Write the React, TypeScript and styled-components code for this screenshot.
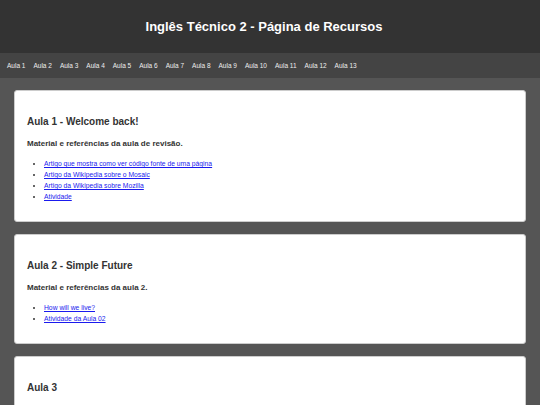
import React from 'react';
import styled, { createGlobalStyle } from 'styled-components';

const GlobalStyle = createGlobalStyle`
  html, body {
    margin: 0;
    padding: 0;
    background: #555555;
    font-family: "Liberation Sans", Arial, sans-serif;
  }
`;

interface LinkItem {
  label: string;
}

interface Lesson {
  title: string;
  subtitle?: string;
  links: LinkItem[];
}

const LESSONS: Lesson[] = [
  {
    title: 'Aula 1 - Welcome back!',
    subtitle: 'Material e referências da aula de revisão.',
    links: [
      { label: 'Artigo que mostra como ver código fonte de uma página' },
      { label: 'Artigo da Wikipedia sobre o Mosaic' },
      { label: 'Artigo da Wikipedia sobre Mozilla' },
      { label: 'Atividade' },
    ],
  },
  {
    title: 'Aula 2 - Simple Future',
    subtitle: 'Material e referências da aula 2.',
    links: [{ label: 'How will we live?' }, { label: 'Atividade da Aula 02' }],
  },
  {
    title: 'Aula 3',
    subtitle: 'Material e referências da aula 3.',
    links: [{ label: 'Atividade da Aula 03' }],
  },
];

const NAV = Array.from({ length: 13 }, (_, i) => `Aula ${i + 1}`);

const Header = styled.header`
  height: 53px;
  background: #333333;
  display: flex;
  align-items: center;
  justify-content: center;
  padding-right: 12px;
`;

const Title = styled.h1`
  margin: 0;
  color: #ffffff;
  font-size: 13px;
  font-weight: bold;
`;

const Nav = styled.nav`
  height: 25px;
  background: #444444;
  display: flex;
  align-items: center;
  padding: 0 7px;
  gap: 8px;
`;

const NavLink = styled.a`
  color: #eeeeee;
  font-size: 6.5px;
  text-decoration: none;
`;

const Main = styled.main`
  display: flex;
  flex-direction: column;
  gap: 12px;
  padding: 12px 14px;
`;

const Card = styled.section`
  background: #ffffff;
  border: 1px solid #cccccc;
  border-radius: 3px;
  padding: 25px 12px 19px;
`;

const CardTitle = styled.h2`
  margin: 0 0 12px;
  font-size: 10px;
  color: #333333;
  font-weight: bold;
`;

const CardSubtitle = styled.p`
  margin: 0 0 10px;
  font-size: 8px;
  color: #333333;
  font-weight: bold;
`;

const LinkList = styled.ul`
  margin: 0;
  padding-left: 17px;
  font-size: 6.75px;
  line-height: 11px;
  color: #333333;
`;

const Link = styled.a`
  color: #1a1aee;
`;

export default function App() {
  return (
    <>
      <GlobalStyle />
      <Header>
        <Title>Inglês Técnico 2 - Página de Recursos</Title>
      </Header>
      <Nav>
        {NAV.map(label => (
          <NavLink key={label} href="#">
            {label}
          </NavLink>
        ))}
      </Nav>
      <Main>
        {LESSONS.map(lesson => (
          <Card key={lesson.title}>
            <CardTitle>{lesson.title}</CardTitle>
            {lesson.subtitle && <CardSubtitle>{lesson.subtitle}</CardSubtitle>}
            <LinkList>
              {lesson.links.map(link => (
                <li key={link.label}>
                  <Link href="#">{link.label}</Link>
                </li>
              ))}
            </LinkList>
          </Card>
        ))}
      </Main>
    </>
  );
}
